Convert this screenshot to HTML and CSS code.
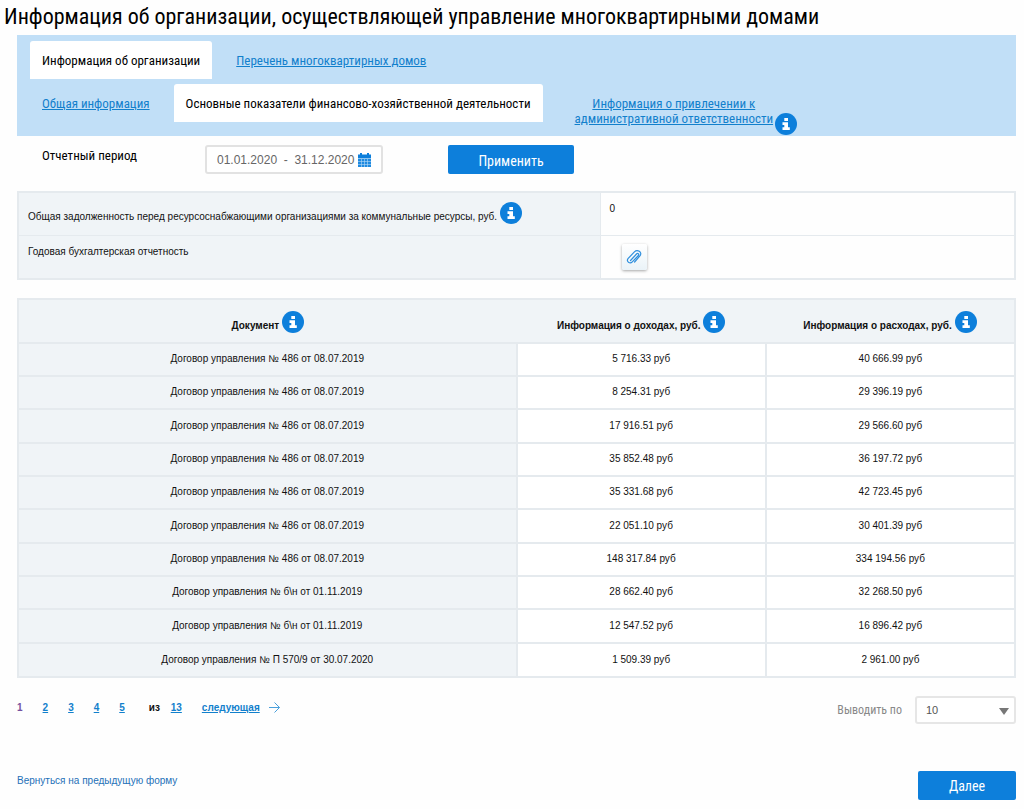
FILE: index.html
```html
<!DOCTYPE html>
<html lang="ru">
<head>
<meta charset="utf-8">
<meta name="viewport" content="width=device-width, initial-scale=1">
<title>Информация об организации</title>
<link rel="stylesheet" href="styles.css">
</head>
<body>
<svg class="sprite" aria-hidden="true">
  <symbol id="info" viewBox="0 0 22 22">
    <circle cx="11" cy="11" r="11" fill="#0d7fdb"/>
    <path d="M9.300 5h3.700v3H9.300zM7.500 9.200H13v5h1.800V17H7.500v-2.800h1.800V12H7.500z" fill="#fff"/>
  </symbol>
</svg>
<h1 class="title">Информация об организации, осуществляющей управление многоквартирными домами</h1>
<main class="page">
  <nav class="tabs">
    <div class="tab-row">
      <a class="tab tab-active" href="#org">Информация об организации</a>
      <a class="tab" href="#houses">Перечень многоквартирных домов</a>
    </div>
    <div class="tab-row">
      <a class="tab" href="#common">Общая информация</a>
      <a class="tab tab-active" href="#finance">Основные показатели финансово-хозяйственной деятельности</a>
      <div class="tab-multi">
        <a class="tab-link" href="#liability">Информация о привлечении к<br>административной ответственности</a>
        <svg class="info info-tab"><use href="#info"/></svg>
      </div>
    </div>
  </nav>

  <form class="filter">
    <label class="filter-label" for="period">Отчетный период</label>
    <div class="date-box">
      <input class="date-input" id="period" type="text" value="01.01.2020  -  31.12.2020">
      <button class="calendar" type="button" aria-label="Календарь">
        <svg viewBox="0 0 13 14" width="13" height="14">
          <path d="M0 1.500h2V0h2v1.500h5V0h2v1.500h2V5H0z" fill="#0d7fdb"/>
          <path d="M0 5.500h13V14H0z" fill="#1f8ae0"/>
          <path d="M0 8.500h13M0 11.500h13M3.500 6v8M6.500 6v8M9.500 6v8" stroke="#b5d9f5" stroke-width=".6"/>
        </svg>
      </button>
    </div>
    <button class="btn btn-apply" type="button">Применить</button>
  </form>

  <table class="summary">
    <tbody>
      <tr>
        <th scope="row">Общая задолженность перед ресурсоснабжающими организациями за коммунальные ресурсы, руб. <svg class="info"><use href="#info"/></svg></th>
        <td>0</td>
      </tr>
      <tr>
        <th scope="row">Годовая бухгалтерская отчетность</th>
        <td>
          <button class="attach" type="button" aria-label="Вложение">
            <svg viewBox="0 0 16 14" width="16" height="14" fill="none" stroke="#2f8fdd" stroke-width="1.200" stroke-linecap="round">
              <path d="M4.500 10.500 10.500 4c1.300-1.300 3 .1 1.900 1.500L6.300 11.900c-2.300 2.400-6.500-.4-4.300-3.300L8.400 1.900c3-2.900 8.200.2 5.700 3.800L8.600 12"/>
            </svg>
          </button>
        </td>
      </tr>
    </tbody>
  </table>

  <table class="data">
    <colgroup><col class="col-doc"><col class="col-sum"><col class="col-sum"></colgroup>
    <thead>
      <tr>
        <th scope="col">Документ <svg class="info"><use href="#info"/></svg></th>
        <th scope="col">Информация о доходах, руб. <svg class="info"><use href="#info"/></svg></th>
        <th scope="col">Информация о расходах, руб. <svg class="info"><use href="#info"/></svg></th>
      </tr>
    </thead>
    <tbody>
      <tr><td>Договор управления № 486 от 08.07.2019</td><td>5 716.33 руб</td><td>40 666.99 руб</td></tr>
      <tr><td>Договор управления № 486 от 08.07.2019</td><td>8 254.31 руб</td><td>29 396.19 руб</td></tr>
      <tr><td>Договор управления № 486 от 08.07.2019</td><td>17 916.51 руб</td><td>29 566.60 руб</td></tr>
      <tr><td>Договор управления № 486 от 08.07.2019</td><td>35 852.48 руб</td><td>36 197.72 руб</td></tr>
      <tr><td>Договор управления № 486 от 08.07.2019</td><td>35 331.68 руб</td><td>42 723.45 руб</td></tr>
      <tr><td>Договор управления № 486 от 08.07.2019</td><td>22 051.10 руб</td><td>30 401.39 руб</td></tr>
      <tr><td>Договор управления № 486 от 08.07.2019</td><td>148 317.84 руб</td><td>334 194.56 руб</td></tr>
      <tr><td>Договор управления № б\н от 01.11.2019</td><td>28 662.40 руб</td><td>32 268.50 руб</td></tr>
      <tr><td>Договор управления № б\н от 01.11.2019</td><td>12 547.52 руб</td><td>16 896.42 руб</td></tr>
      <tr><td>Договор управления № П 570/9 от 30.07.2020</td><td>1 509.39 руб</td><td>2 961.00 руб</td></tr>
    </tbody>
  </table>

  <div class="list-footer">
    <nav class="pager">
      <span class="current">1</span>
      <a href="#p2">2</a>
      <a href="#p3">3</a>
      <a href="#p4">4</a>
      <a href="#p5">5</a>
      <span class="of">из <a href="#p13">13</a></span>
      <span class="next"><a href="#next">следующая</a>
        <svg viewBox="0 0 11 11" width="11" height="11" fill="none" stroke="#4aa0dc"><path d="M0 5.500h10.500M5.500.5l5 5-5 5"/></svg></span>
    </nav>
    <div class="per-page">
      <label for="size">Выводить по</label>
      <div class="select-box">
        <select id="size"><option>10</option><option>20</option><option>50</option></select>
        <svg class="caret" viewBox="0 0 10 7" width="10" height="7"><path d="M0 0h10L5 7z" fill="#777"/></svg>
      </div>
    </div>
  </div>

  <footer class="actions">
    <a class="back" href="#back">Вернуться на предыдущую форму</a>
    <button class="btn btn-next" type="button">Далее</button>
  </footer>
</main>
</body>
</html>
```
FILE: styles.css
```css
* { box-sizing: border-box; }

body {
  margin: 0;
  background: #fefefe;
  color: #111;
  font: 10px/14px "Liberation Sans", Arial, sans-serif;
}

.sprite { display: block; width: 0; height: 0; }

.title,
.tabs,
.filter-label,
.per-page label,
.btn {
  font-family: "Roboto Condensed", "Liberation Sans Narrow", Roboto, sans-serif;
  font-weight: 400;
}

.title {
  margin: 0;
  padding: 3px 4px 4px;
  color: #000;
  font-size: 22px;
  line-height: 28px;
}

.page { padding: 0 8px 0 17px; }

.info {
  width: 22px;
  height: 22px;
  vertical-align: -4px;
}

.tabs {
  padding: 6px 13px 10px;
  background: #c1dff7;
  font-size: 13px;
  line-height: 16px;
}

.tab-row { display: flex; align-items: flex-start; gap: 12px; }
.tab-row + .tab-row { margin-top: 5px; }

.tab {
  padding: 12px 12px 10px;
  color: #1280cc;
  text-decoration: underline;
}

.tab-active {
  border-radius: 3px 3px 0 0;
  background: #fff;
  color: #000;
  text-decoration: none;
}

.tab-multi { position: relative; padding: 12px 0 0 20px; text-align: center; line-height: 15px; }
.tab-link { color: #1280cc; }
.info-tab { position: absolute; right: -24px; bottom: -9px; }

.filter { display: flex; align-items: flex-start; padding: 9px 0 0 25px; }
.filter-label { width: 163px; padding-top: 3px; color: #000; font-size: 13px; line-height: 16px; }

.date-box {
  display: flex;
  align-items: center;
  width: 178px;
  height: 29px;
  padding: 0 10px;
  border: 2px solid #e2e2e2;
  border-radius: 3px;
  background: #fff;
}

.date-input {
  flex: 1;
  min-width: 0;
  padding: 0;
  border: 0;
  background: none;
  color: #666;
  font: 12px/16px "Liberation Sans", Arial, sans-serif;
  white-space: pre;
}

.calendar { display: flex; padding: 0; border: 0; background: none; }

.btn {
  height: 29px;
  padding: 2px 0 0;
  border: 0;
  border-radius: 2px;
  background: #0d7fdb;
  color: #fff;
  font-size: 14px;
  line-height: 16px;
}

.btn-apply { width: 126px; margin-left: 65px; }
.btn-next { width: 98px; }

table { width: 100%; border-collapse: collapse; table-layout: fixed; }

.summary { margin-top: 17px; border: 2px solid #e5eaee; }
.summary tr { height: 43px; }
.summary th,
.summary td { padding: 9px 9px 7px; vertical-align: top; text-align: left; border-bottom: 1px solid #e5eaee; }
.summary th { width: 582px; background: #f0f4f7; font-weight: 400; border-right: 1px solid #e5eaee; }
.summary tr + tr td { padding: 8px 21px; }

.attach {
  display: flex;
  align-items: center;
  justify-content: center;
  width: 25px;
  height: 26px;
  padding: 0;
  border: 0;
  border-radius: 2px;
  background: linear-gradient(#fff, #eaf3f8);
  box-shadow: 0 1px 3px rgba(0, 0, 0, .35);
}

.data { margin-top: 18px; border: 2px solid #e5eaee; text-align: center; }
.data thead { background: #f0f4f7; }
.col-doc { width: 50%; }
.col-sum { width: 25%; }
.data th,
.data td { padding: 0 4px; border-bottom: 2px solid #e5eaee; }
.data td + td { border-left: 2px solid #e5eaee; }
.data th { height: 44px; padding-top: 3px; }
.data td { height: 33px; background: #fff; }
.data tr:nth-child(3n) td,
.data tr:last-child td { height: 34px; }
.data td:first-child { background: #f0f4f7; }

.list-footer { display: flex; justify-content: space-between; align-items: flex-start; padding-top: 18px; }

.pager { display: flex; gap: 20px; padding-top: 5px; font-weight: 700; }
.pager a { color: #1280cc; }
.current { color: #7551a0; }
.of { margin-left: 4px; }
.of a { margin-left: 8px; }
.next svg { margin-left: 6px; vertical-align: -2px; }

.per-page { display: flex; align-items: center; gap: 13px; }
.per-page label { color: #888; font-size: 12px; line-height: 16px; }

.select-box { position: relative; }
.select-box select {
  appearance: none;
  width: 101px;
  height: 28px;
  padding: 0 9px;
  border: 2px solid #e6e6e6;
  border-radius: 3px;
  background: #fff;
  color: #555;
  font: 11px/14px "Liberation Sans", Arial, sans-serif;
}
.caret { position: absolute; right: 7px; top: 12px; pointer-events: none; }

.actions { display: flex; justify-content: space-between; align-items: flex-start; padding: 47px 0 9px; }
.back { padding-top: 3px; color: #2470b8; text-decoration: none; }
```
